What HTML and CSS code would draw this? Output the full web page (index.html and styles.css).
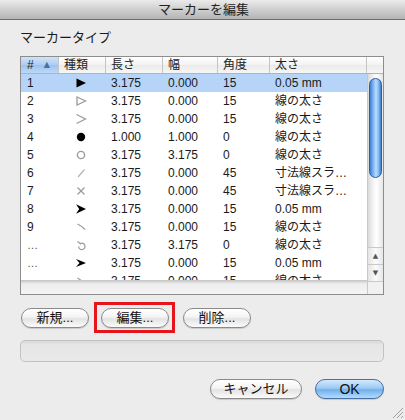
FILE: index.html
```html
<!DOCTYPE html>
<html lang="ja">
<head>
<meta charset="utf-8">
<title>マーカーを編集</title>
<link rel="stylesheet" href="styles.css">
</head>
<body>
<div class="window">
  <div class="titlebar">マーカーを編集</div>
  <div class="content">
    <div class="group-label">マーカータイプ</div>
    <div class="table">
      <div class="thead">
        <div class="th sorted"><span>#</span><span class="sort-arrow">▲</span></div>
        <div class="th">種類</div>
        <div class="th">長さ</div>
        <div class="th">幅</div>
        <div class="th">角度</div>
        <div class="th">太さ</div>
        <div class="th filler"></div>
      </div>
      <div class="tbody">
        <div class="list">
          <div class="rows">
            <div class="row selected">
              <div class="td num">1</div>
              <div class="td icon"><svg viewBox="0 0 12 12" width="12" height="12"><polygon points="1.5,1.5 11,6 1.5,10.5" fill="#000"/></svg></div>
              <div class="td">3.175</div><div class="td">0.000</div><div class="td">15</div><div class="td">0.05 mm</div>
            </div>
            <div class="row">
              <div class="td num">2</div>
              <div class="td icon"><svg viewBox="0 0 12 12" width="12" height="12"><polygon points="2,2 10.5,6 2,10" fill="none" stroke="#9a9a9a" stroke-width="1.3"/></svg></div>
              <div class="td">3.175</div><div class="td">0.000</div><div class="td">15</div><div class="td">線の太さ</div>
            </div>
            <div class="row">
              <div class="td num">3</div>
              <div class="td icon"><svg viewBox="0 0 12 12" width="12" height="12"><polyline points="1.5,1.5 10.5,6 1.5,10.5" fill="none" stroke="#9a9a9a" stroke-width="1.3"/></svg></div>
              <div class="td">3.175</div><div class="td">0.000</div><div class="td">15</div><div class="td">線の太さ</div>
            </div>
            <div class="row">
              <div class="td num">4</div>
              <div class="td icon"><svg viewBox="0 0 12 12" width="12" height="12"><circle cx="6" cy="6" r="4.2" fill="#000"/></svg></div>
              <div class="td">1.000</div><div class="td">1.000</div><div class="td">0</div><div class="td">線の太さ</div>
            </div>
            <div class="row">
              <div class="td num">5</div>
              <div class="td icon"><svg viewBox="0 0 12 12" width="12" height="12"><circle cx="6" cy="6" r="3.6" fill="none" stroke="#9a9a9a" stroke-width="1.4"/></svg></div>
              <div class="td">3.175</div><div class="td">3.175</div><div class="td">0</div><div class="td">線の太さ</div>
            </div>
            <div class="row">
              <div class="td num">6</div>
              <div class="td icon"><svg viewBox="0 0 12 12" width="12" height="12"><line x1="3" y1="10" x2="9.5" y2="2.5" stroke="#b4b4b4" stroke-width="1.2"/></svg></div>
              <div class="td">3.175</div><div class="td">0.000</div><div class="td">45</div><div class="td">寸法線スラ…</div>
            </div>
            <div class="row">
              <div class="td num">7</div>
              <div class="td icon"><svg viewBox="0 0 12 12" width="12" height="12"><line x1="2.5" y1="2.5" x2="9.5" y2="9.5" stroke="#9a9a9a" stroke-width="1.2"/><line x1="9.5" y1="2.5" x2="2.5" y2="9.5" stroke="#9a9a9a" stroke-width="1.2"/></svg></div>
              <div class="td">3.175</div><div class="td">0.000</div><div class="td">45</div><div class="td">寸法線スラ…</div>
            </div>
            <div class="row">
              <div class="td num">8</div>
              <div class="td icon"><svg viewBox="0 0 12 12" width="12" height="12"><polygon points="1,1.2 11,6 1,10.8 4.2,6" fill="#000"/></svg></div>
              <div class="td">3.175</div><div class="td">0.000</div><div class="td">15</div><div class="td">0.05 mm</div>
            </div>
            <div class="row">
              <div class="td num">9</div>
              <div class="td icon"><svg viewBox="0 0 12 12" width="12" height="12"><path d="M2.5,3 Q6,4.5 10,8.5" fill="none" stroke="#9a9a9a" stroke-width="1.2"/></svg></div>
              <div class="td">3.175</div><div class="td">0.000</div><div class="td">15</div><div class="td">線の太さ</div>
            </div>
            <div class="row">
              <div class="td num dots">…</div>
              <div class="td icon"><svg viewBox="0 0 12 12" width="12" height="12"><path d="M2.5,2.5 L6,5.2 M5.2,4.6 A3.2,3.2 0 1 1 3.6,7.4" fill="none" stroke="#9a9a9a" stroke-width="1.2"/></svg></div>
              <div class="td">3.175</div><div class="td">3.175</div><div class="td">0</div><div class="td">線の太さ</div>
            </div>
            <div class="row">
              <div class="td num dots">…</div>
              <div class="td icon"><svg viewBox="0 0 12 12" width="12" height="12"><polygon points="1,2 11,6 1,10 4.5,6" fill="#000"/></svg></div>
              <div class="td">3.175</div><div class="td">0.000</div><div class="td">15</div><div class="td">0.05 mm</div>
            </div>
            <div class="row">
              <div class="td num dots">…</div>
              <div class="td icon"><svg viewBox="0 0 12 12" width="12" height="12"><line x1="2.5" y1="3" x2="10" y2="8" stroke="#9a9a9a" stroke-width="1.2"/></svg></div>
              <div class="td">3.175</div><div class="td">0.000</div><div class="td">15</div><div class="td">線の太さ</div>
            </div>
          </div>
          <div class="hstrip"></div>
        </div>
        <div class="vscroll">
          <div class="track"><div class="thumb"></div></div>
          <div class="arrow-btn">▲</div>
          <div class="arrow-btn">▼</div>
          <div class="corner"></div>
        </div>
      </div>
    </div>

    <div class="button-row">
      <button class="aqua">新規...</button>
      <div class="highlight"><button class="aqua">編集...</button></div>
      <button class="aqua">削除...</button>
    </div>

    <div class="status-field"></div>

    <div class="dialog-buttons">
      <button class="aqua wide">キャンセル</button>
      <button class="aqua default">OK</button>
    </div>
  </div>
  <svg class="grip" viewBox="0 0 14 14" width="14" height="14">
    <line x1="13" y1="3" x2="3" y2="13" stroke="#a0a0a0" stroke-width="1"/>
    <line x1="13" y1="7" x2="7" y2="13" stroke="#a0a0a0" stroke-width="1"/>
    <line x1="13" y1="11" x2="11" y2="13" stroke="#a0a0a0" stroke-width="1"/>
  </svg>
</div>
</body>
</html>
```
FILE: styles.css
```css
* { box-sizing: border-box; }
html, body { margin: 0; padding: 0; }
body {
  width: 405px;
  height: 420px;
  overflow: hidden;
  background: #ececec;
  font-family: "Liberation Sans", "Noto Sans CJK JP", sans-serif;
  color: #1a1a1a;
}
.window {
  position: relative;
  width: 405px;
  height: 420px;
  background: #ececec;
}
.titlebar {
  height: 20px;
  line-height: 19px;
  text-align: center;
  font-size: 13px;
  color: #222;
  background: linear-gradient(#ebebeb, #c9c9c9 60%, #b5b5b5);
  border-bottom: 1px solid #6d6d6d;
  padding-left: 2px;
}
.content {
  padding: 10px 21px 0 20px;
}
.group-label {
  font-size: 13px;
  line-height: 16px;
  height: 16px;
  color: #1a1a1a;
}
.table {
  margin-top: 10px;
  width: 364px;
  height: 239px;
  border: 1px solid #8d8d8d;
  background: #fff;
  display: flex;
  flex-direction: column;
}
.thead {
  display: grid;
  grid-template-columns: 38px 47px 57px 55px 52px 97px 16px;
  height: 17px;
  border-bottom: 1px solid #b3b3b3;
  background: linear-gradient(#ffffff, #f3f3f3 50%, #ebebeb 51%, #f6f6f6);
}
.th {
  font-size: 12px;
  line-height: 16px;
  padding-left: 5px;
  border-right: 1px solid #c4c4c4;
  color: #222;
  white-space: nowrap;
}
.th.filler { border-right: none; }
.th.sorted {
  padding-left: 6px;
  background: linear-gradient(#cfe2f9, #aecdf2 50%, #9ec2ee 51%, #bcd8f8);
  display: flex;
  gap: 10px;
}
.sort-arrow {
  font-family: "DejaVu Sans", sans-serif;
  font-size: 8px;
  color: #4b6f9e;
}
.tbody {
  flex: 1;
  display: flex;
}
.list {
  width: 346px;
  display: flex;
  flex-direction: column;
}
.rows {
  height: 206px;
  overflow: hidden;
}
.row {
  display: grid;
  grid-template-columns: 38px 47px 57px 55px 52px 97px;
  height: 18px;
  align-items: center;
}
.row.selected { background: #b6d4f7; }
.td {
  font-size: 12px;
  line-height: 18px;
  padding-left: 5px;
  white-space: nowrap;
  overflow: hidden;
  color: #1a1a1a;
}
.td.num { padding-left: 6px; }
.td.num.dots {
  font-family: "Liberation Sans", sans-serif;
  color: #555;
  font-size: 11px;
}
.td.icon {
  padding-left: 16px;
  display: flex;
  align-items: center;
  height: 18px;
}
.hstrip {
  flex: 1;
  background: linear-gradient(#cfcfcf, #eeeeee 3px, #f4f4f4);
  border-top: 1px solid #c8c8c8;
}
.vscroll {
  width: 16px;
  display: flex;
  flex-direction: column;
  border-left: 1px solid #c9c9c9;
}
.track {
  height: 173px;
  padding: 4px 1px 0 1px;
  background: linear-gradient(to right, #dadada, #f7f7f7 40%, #ffffff 55%, #e6e6e6);
}
.thumb {
  height: 100px;
  border-radius: 7px;
  border: 1px solid #2c5d9c;
  background: linear-gradient(to right, #3f7fd0, #7fb6f0 30%, #b9dcff 55%, #7db4ee 80%, #3d7bcc);
}
.arrow-btn {
  height: 17px;
  font-family: "DejaVu Sans", sans-serif;
  font-size: 7px;
  line-height: 17px;
  text-align: center;
  color: #555;
  border-top: 1px solid #c9c9c9;
  background: linear-gradient(to right, #e4e4e4, #fafafa 50%, #e8e8e8);
}
.corner {
  flex: 1;
  background: #f1f1f1;
  border-top: 1px solid #c9c9c9;
}
.button-row {
  margin-top: 7px;
  height: 31px;
  display: flex;
  align-items: center;
}
button.aqua {
  height: 20px;
  border-radius: 10px;
  border: 1px solid #8a8a8a;
  background: linear-gradient(#ffffff, #f4f4f4 45%, #e3e3e3 55%, #fbfbfb);
  box-shadow: 0 1px 1px rgba(0,0,0,0.15);
  font-family: "Liberation Sans", "Noto Sans CJK JP", sans-serif;
  font-size: 13px;
  color: #111;
  width: 68px;
  padding: 0;
  line-height: 18px;
}
.button-row > button.aqua:first-child { margin-left: 1px; }
.highlight {
  margin-left: 5px;
  width: 81px;
  height: 31px;
  border: 3px solid #e8141b;
  padding-left: 4px;
  display: flex;
  align-items: center;
}
.highlight + button.aqua { margin-left: 8px; }
.status-field {
  margin-top: 7px;
  width: 364px;
  height: 22px;
  border-radius: 5px;
  border: 1px solid #c2c2c2;
  background: linear-gradient(#d9d9d9, #e6e6e6 4px, #e9e9e9);
}
.dialog-buttons {
  margin-top: 17px;
  width: 364px;
  display: flex;
  justify-content: flex-end;
  gap: 13px;
}
button.aqua.wide { width: 92px; }
button.aqua.default {
  width: 69px;
  border-color: #4a6e9f;
  background: linear-gradient(#d4e9fd, #9ccaf4 45%, #72b0ed 55%, #b3dcfd);
  font-size: 14px;
}
.grip {
  position: absolute;
  right: 1px;
  bottom: 1px;
}
```
